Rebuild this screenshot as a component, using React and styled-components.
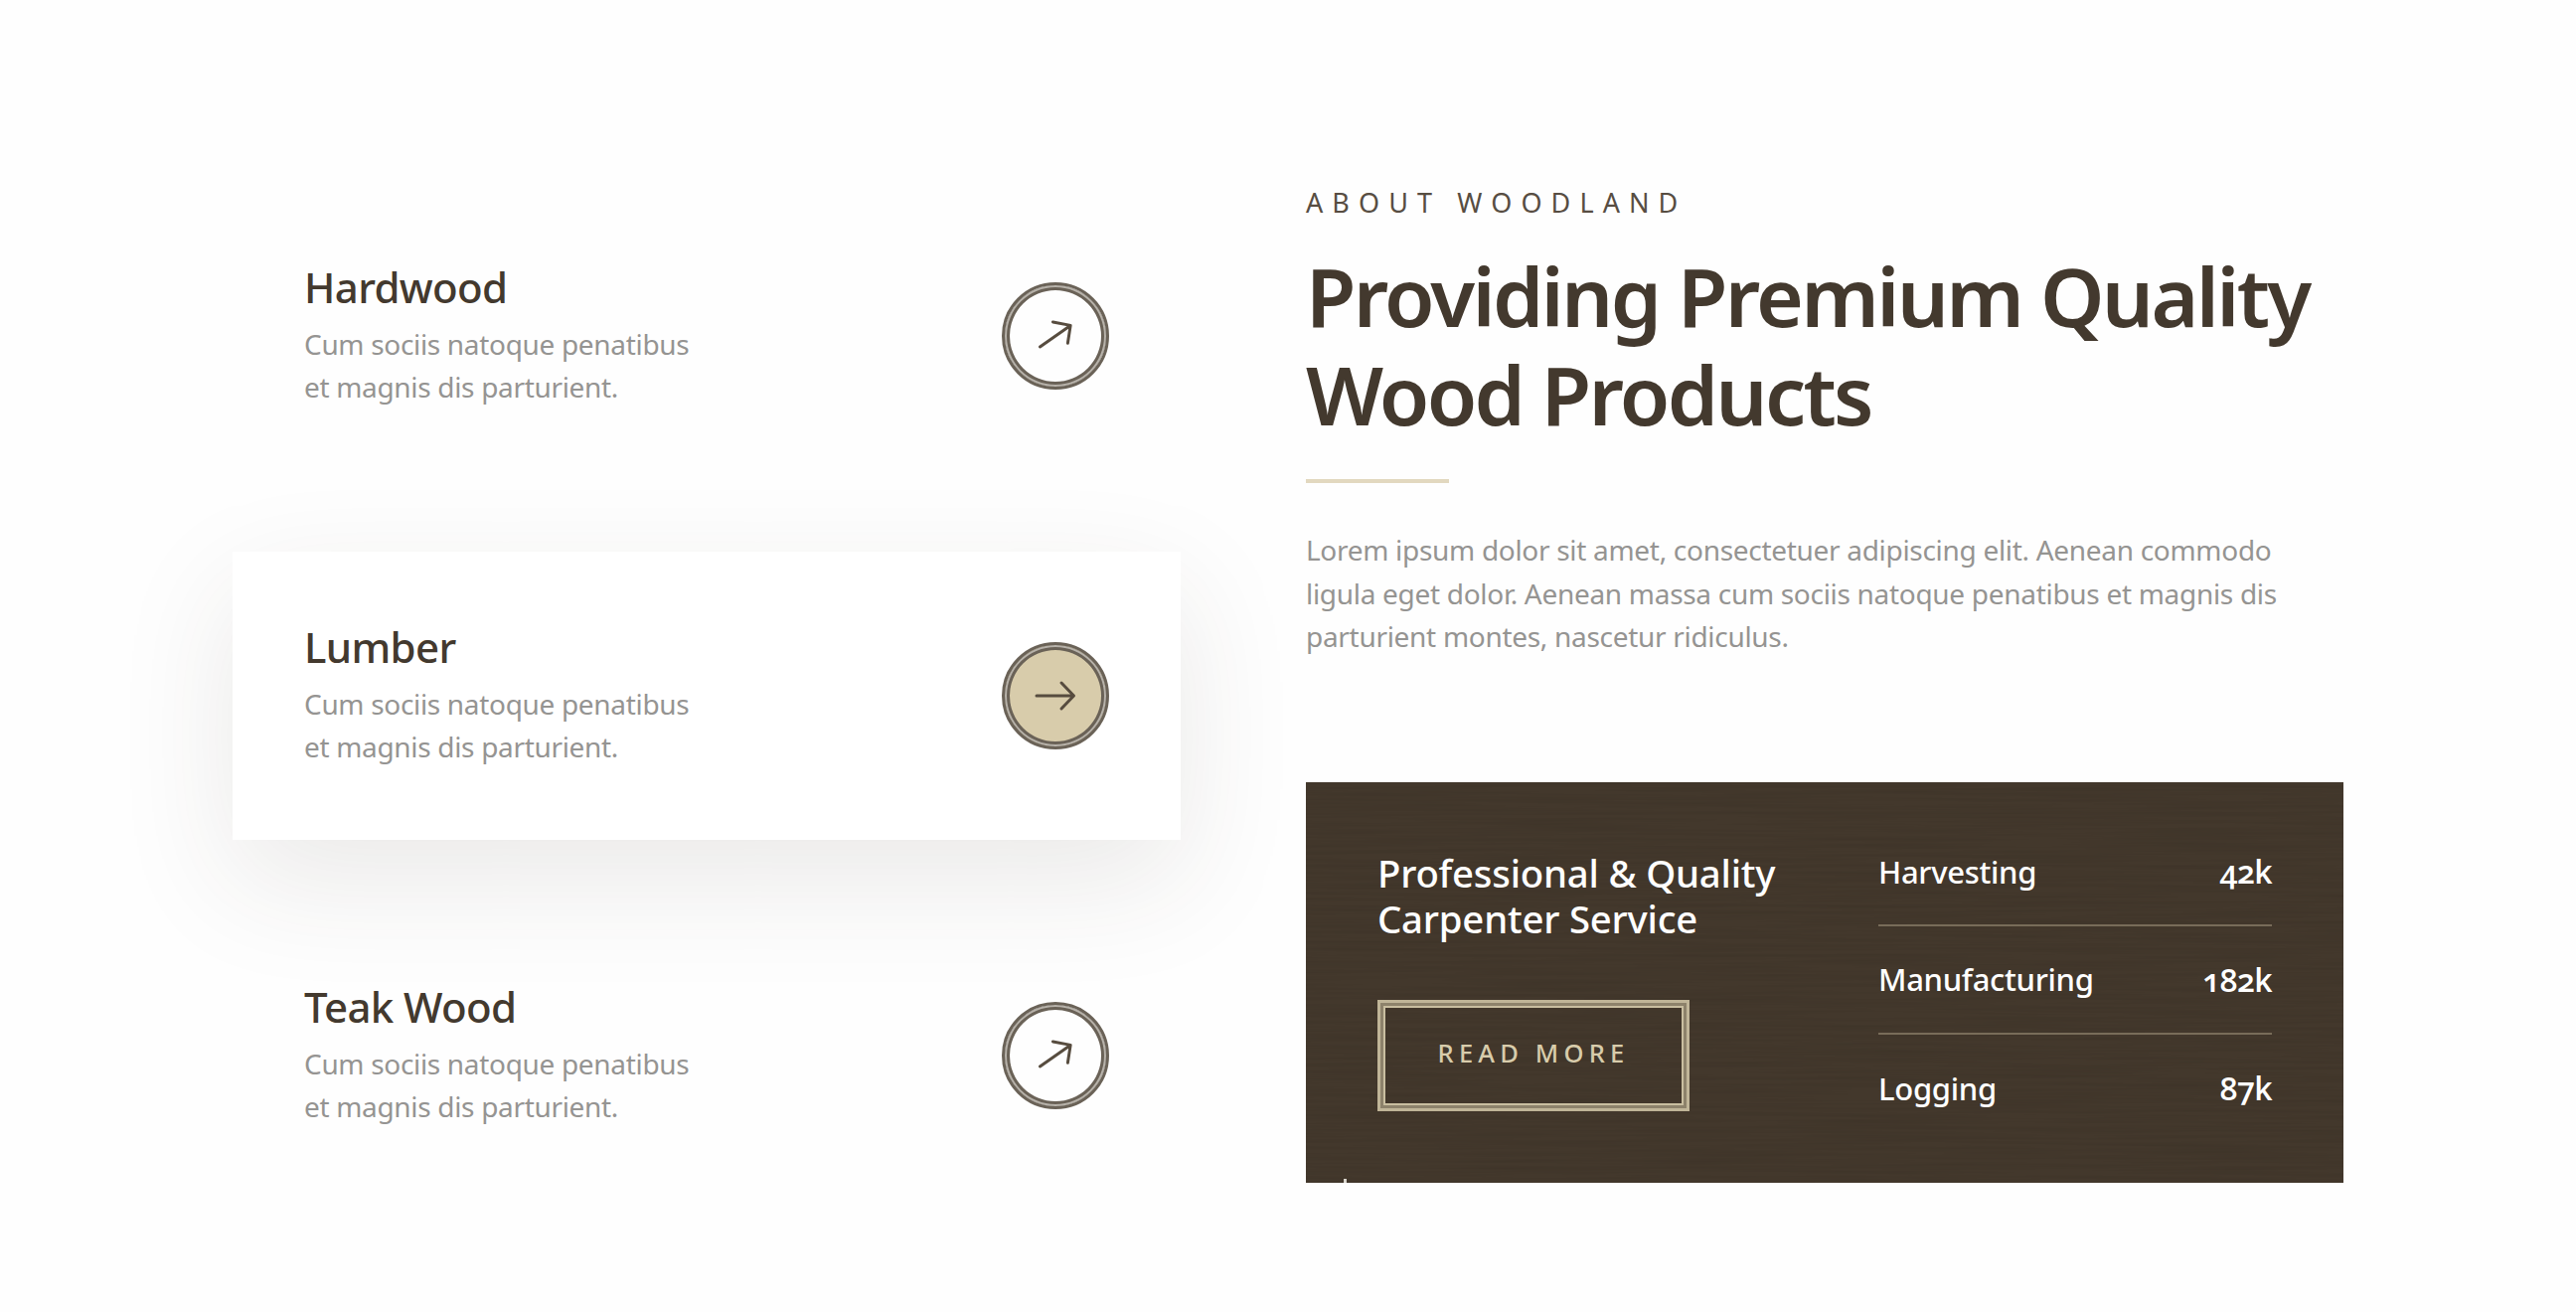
import React from "react";
import styled, { createGlobalStyle } from "styled-components";

const Global = createGlobalStyle`
  html, body { margin: 0; padding: 0; background: #fefefe; }
  * { box-sizing: border-box; }
`;
const sans = `"Noto Sans", "Open Sans", sans-serif`;
const dark = "#43392e";
const tan = "#d8ccab";

const Page = styled.div`
  width: 2592px; height: 1320px; overflow: hidden;
  display: grid; grid-template-columns: 954px 1044px; column-gap: 126px;
  padding: 193px 0 0 234px; font-family: ${sans}; color: ${dark};
`;
const Services = styled.div`display: flex; flex-direction: column; gap: 72px;`;
const Service = styled.div`
  height: 290px; padding: 0 72px; display: flex; align-items: center; justify-content: space-between;
  background: ${p => p.$active ? "#fff" : "transparent"};
  box-shadow: ${p => p.$active ? "0 40px 120px rgba(60,50,35,.1)" : "none"};
`;
const ServiceCopy = styled.div`margin-top: -4px;`;
const ServiceTitle = styled.h3`margin: 0 0 8px; font-size: 42px; line-height: 56px; font-weight: 500; letter-spacing: -.65px;`;
const ServiceText = styled.p`margin: 0; font-size: 28px; line-height: 43px; color: #959492; letter-spacing: -.32px;`;
const Circle = styled.div`
  width: 108px; height: 108px; border-radius: 50%; border: 3px solid #6a6257;
  box-shadow: inset 0 0 0 2px #b7b2aa, inset 0 0 0 5px #6a6257;
  display: flex; align-items: center; justify-content: center; background: ${p => p.$active ? tan : "transparent"};
`;
const About = styled.div`display: flex; flex-direction: column;`;
const Eyebrow = styled.div`margin-top: -6px; font-size: 27px; line-height: 34px; letter-spacing: 9.1px; color: #574d42;`;
const Heading = styled.h1`margin: 27px 0 0; font-size: 82px; line-height: 99px; font-weight: 600; letter-spacing: -2.7px;`;
const Rule = styled.div`width: 144px; height: 4px; background: #e2d8bf; margin-top: 36px;`;
const Lead = styled.p`margin: 46px 0 0; font-size: 28px; line-height: 43.5px; color: #959492; letter-spacing: -.3px;`;
const Panel = styled.div`
  position: relative; margin-top: 124px; height: 403px; background: #43382c; color: #fff;
  padding: 68px 72px; display: grid; grid-template-columns: 434px 396px; column-gap: 70px; overflow: hidden;
`;
const Grain = styled.svg`position: absolute; inset: 0; width: 100%; height: 100%; opacity: .07;`;
const Speck = styled.span`position: absolute; left: 38px; bottom: 0; width: 3px; height: 4px; background: #d9d5cd;`;
const PanelLeft = styled.div`position: relative; display: flex; flex-direction: column; align-items: flex-start;`;
const PanelTitle = styled.h2`margin: 0; font-size: 38.3px; line-height: 46px; font-weight: 500; white-space: nowrap; letter-spacing: -.2px;`;
const ReadMore = styled.a`
  margin-top: 59px; width: 314px; height: 112px; border: 3px solid #c0b598; padding-bottom: 5px;
  box-shadow: inset 0 0 0 3px #8d826b, inset 0 0 0 5px #c9bea0;
  display: flex; align-items: center; justify-content: center;
  color: ${tan}; font-size: 25.5px; letter-spacing: 5.2px; font-weight: 500;
`;
const Stats = styled.div`position: relative; margin-top: -31px;`;
const Stat = styled.div`
  height: 108.5px; display: flex; justify-content: space-between; align-items: center;
  font-size: 31px; font-weight: 500; letter-spacing: -.3px;
  border-bottom: ${p => p.$last ? "none" : "2px solid #786c59"};
`;
const Num = styled.span`font-family: "Open Sans", sans-serif; font-weight: 600; font-size: 32px; letter-spacing: -.6px; font-variant-numeric: oldstyle-nums;`;

const Arrow = ({ diag }) => (
  <svg width="48" height="48" viewBox="0 0 48 48" fill="none" stroke="#574c3f" strokeWidth="3" strokeLinecap="round" strokeLinejoin="round" style={diag ? { transform: "rotate(-35deg)" } : undefined}>
    <path d="M5 24h37M30 11l12.500 13L30 37" />
  </svg>
);

const items = [["Hardwood", false], ["Lumber", true], ["Teak Wood", false]];
const stats = [["Harvesting", "42k"], ["Manufacturing", "182k"], ["Logging", "87k"]];

export default function App() {
  return (
    <Page>
      <Global />
      <Services>
        {items.map(([name, active]) => (
          <Service key={name} $active={active}>
            <ServiceCopy>
              <ServiceTitle>{name}</ServiceTitle>
              <ServiceText>Cum sociis natoque penatibus<br />et magnis dis parturient.</ServiceText>
            </ServiceCopy>
            <Circle $active={active}><Arrow diag={!active} /></Circle>
          </Service>
        ))}
      </Services>
      <About>
        <Eyebrow>ABOUT WOODLAND</Eyebrow>
        <Heading>Providing Premium Quality<br />Wood Products</Heading>
        <Rule />
        <Lead>Lorem ipsum dolor sit amet, consectetuer adipiscing elit. Aenean commodo<br />ligula eget dolor. Aenean massa cum sociis natoque penatibus et magnis dis<br />parturient montes, nascetur ridiculus.</Lead>
        <Panel>
          <Grain>
            <filter id="wood"><feTurbulence type="fractalNoise" baseFrequency="0.006 0.3" numOctaves="3" seed="4" /><feColorMatrix values="0 0 0 0 0 0 0 0 0 0 0 0 0 0 0 0 0 0 1.6 -.6" /></filter>
            <rect width="100%" height="100%" filter="url(#wood)" />
          </Grain>
          <Speck />
          <PanelLeft>
            <PanelTitle>Professional &amp; Quality<br />Carpenter Service</PanelTitle>
            <ReadMore>READ MORE</ReadMore>
          </PanelLeft>
          <Stats>
            {stats.map(([k, v], i) => (
              <Stat key={k} $last={i === 2}><span>{k}</span><Num>{v}</Num></Stat>
            ))}
          </Stats>
        </Panel>
      </About>
    </Page>
  );
}
